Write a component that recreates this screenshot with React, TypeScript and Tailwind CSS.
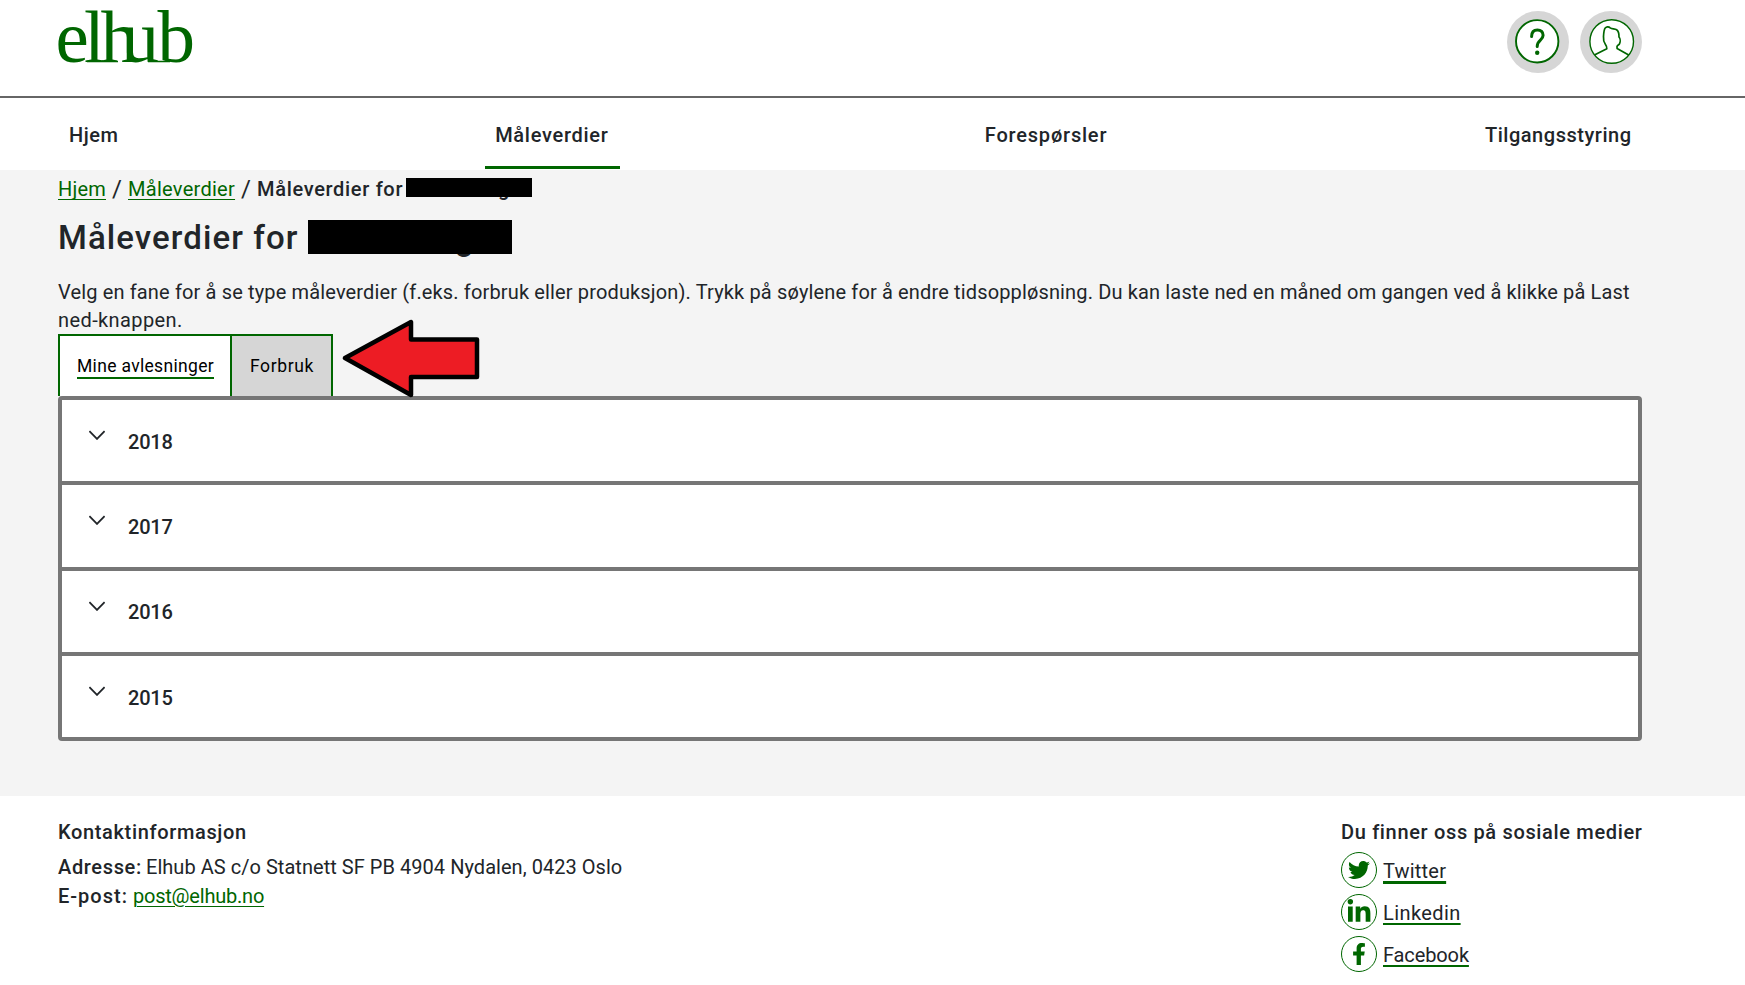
import type { ReactNode } from "react";
import { FaFacebookF, FaLinkedinIn, FaTwitter } from "react-icons/fa";

const navItems = [
  { label: "Hjem", box: "w-[72px] pl-[11px] tracking-[0.5px]", active: false },
  { label: "Måleverdier", box: "w-[135px] pl-[10.5px] tracking-[0.72px]", active: true },
  { label: "Forespørsler", box: "w-[145px] pl-[10.5px] tracking-[0.8px]", active: false },
  { label: "Tilgangsstyring", box: "w-[168px] pl-[11px] tracking-[0.53px]", active: false },
];

const years = [
  { year: 2018, box: "h-[85px] border-b-4", label: "pt-[28px]" },
  { year: 2017, box: "h-[86px] border-b-4", label: "pt-[28px]" },
  { year: 2016, box: "h-[85px] border-b-4", label: "pt-[27px]" },
  { year: 2015, box: "h-[81px]", label: "pt-[28px]" },
];

function Logo() {
  return (
    <svg viewBox="0 0 140 56" className="h-14 w-[140px] overflow-visible" role="img" aria-label="elhub">
      <text x="-2.5 26 42.5 63.5 99.5" y="51" fontSize="75" fill="#006600" fontFamily="Liberation Serif, serif">
        elhub
      </text>
      <path d="M29 50.4H60M90 50.4H112" stroke="#006600" strokeWidth="1.5" />
    </svg>
  );
}

function HelpIcon() {
  return (
    <svg viewBox="0 0 62 62" className="size-[62px]" fill="none">
      <circle cx="31" cy="31" r="31" fill="#d6d6d6" />
      <circle cx="30.2" cy="30.3" r="21.2" fill="#fff" stroke="#006600" strokeWidth="1.9" />
      <path
        d="M24.6 25.6C24.6 21 27 18.9 30.4 18.9C34 18.9 36.1 21.2 36.1 24.2C36.1 29.6 30.2 28.6 30.2 35.4"
        stroke="#006600"
        strokeWidth="3"
        strokeLinecap="round"
      />
      <circle cx="30.2" cy="41.7" r="2.2" fill="#006600" />
    </svg>
  );
}

function UserIcon() {
  return (
    <svg viewBox="0 0 62 62" className="size-[62px]" fill="none">
      <circle cx="31" cy="31" r="31" fill="#d6d6d6" />
      <circle cx="31.7" cy="30.5" r="21.8" fill="#fff" stroke="#006600" strokeWidth="1.4" />
      <path
        d="M14.9 43.8L26.8 37.8C26.8 35.6 26.4 34.6 25.2 33C23.5 30.8 23.3 28.5 23.5 25.5C23.7 21.5 23.9 18.6 25.2 17C26.4 15.7 28.6 15.2 30.2 16.9C32 18.2 34.6 17.6 36.6 18.8C38.6 20.2 39.1 23 39 26C40.2 27.4 40.6 30.6 39.6 32.6C39 34 37.4 34 37 35.4L37.1 37.5L48.7 44"
        stroke="#006600"
        strokeWidth="1.7"
        strokeLinejoin="round"
      />
    </svg>
  );
}

function SocialLink({ icon, children }: { icon: ReactNode; children: ReactNode }) {
  return (
    <li className="flex h-9 gap-[6px]">
      <span className="flex size-9 items-center justify-center rounded-full border border-[#006600] text-[#006600]">{icon}</span>
      <span className="pt-[5px]">{children}</span>
    </li>
  );
}

export default function App() {
  return (
    <div className="h-[985px] w-[1745px] overflow-hidden bg-white font-['Roboto',sans-serif] text-[20px] leading-[28px] whitespace-nowrap text-[#212529]">
      <header>
        <div className="h-[98px] border-b-2 border-[#666]">
          <div className="ml-[58px] flex w-[1584px] justify-between pt-[11px]">
            <Logo />
            <div className="flex gap-[11px]">
              <HelpIcon />
              <UserIcon />
            </div>
          </div>
        </div>
        <nav className="ml-[58px] flex h-[72px] w-[1584px] justify-between font-medium">
          {navItems.map((n) => (
            <a key={n.label} className={`${n.box} h-[71px] pt-[23px] ${n.active ? "border-b-[3px] border-[#006600]" : ""}`}>
              {n.label}
            </a>
          ))}
        </nav>
      </header>

      <main className="h-[626px] bg-[#f4f4f4] pt-[5px] pl-[58px]">
        <div className="flex h-[28px]">
          <a className="w-[48px] tracking-[0.2px] text-[#006600] underline decoration-1 underline-offset-[3px] [text-decoration-skip-ink:none]">Hjem</a>
          <span className="w-[22px] text-center text-[24px]">/</span>
          <a className="w-[107px] tracking-[0.28px] text-[#006600] underline decoration-1 underline-offset-[3px] [text-decoration-skip-ink:none]">Måleverdier</a>
          <span className="w-[22px] text-center text-[24px]">/</span>
          <span className="w-[149px] font-medium tracking-[0.68px]">Måleverdier for</span>
          <span className="relative w-[126px] pl-[92px] font-medium">
            g<span className="absolute top-[3px] left-0 h-[19px] w-[126px] bg-black" />
          </span>
        </div>
        <h1 className="mt-[15px] flex h-[40px] text-[33px] leading-[40px] font-medium">
          <span className="w-[250px] tracking-[1.08px]">Måleverdier for</span>
          <span className="relative w-[204px] pl-[147px]">
            <span className="relative top-px">g</span>
            <span className="absolute top-[2px] left-0 h-[34px] w-[204px] bg-black" />
          </span>
        </h1>
        <p className="mt-[20px]">
          <span className="tracking-[0.145px]">
            Velg en fane for å se type måleverdier (f.eks. forbruk eller produksjon). Trykk på søylene for å endre tidsoppløsning. Du kan laste ned en måned om gangen ved å klikke på Last
          </span>
          <br />
          <span className="tracking-[0.4px]">ned-knappen.</span>
        </p>
        <div className="relative flex h-[62px] text-[17.5px] text-black">
          <button className="flex w-[174px] items-start border-x-2 border-t-2 border-[#006600] bg-white pt-4 pl-[17px]">
            <span className="tracking-[0.32px] underline decoration-[#006600] decoration-2 underline-offset-[5px] [text-decoration-skip-ink:none]">Mine avlesninger</span>
          </button>
          <button className="flex w-[101px] items-start border-t-2 border-r-2 border-[#006600] bg-[#d6d6d6] pt-4 pl-[18px] tracking-[0.6px]">Forbruk</button>
          <svg viewBox="0 0 140 82" className="absolute top-[-16px] left-[284px] h-[82px] w-[140px]">
            <path d="M3 40L69 4V21.5H135V59H69V77Z" fill="#ed1c24" stroke="#000" strokeWidth="4.5" strokeLinejoin="round" />
          </svg>
        </div>
        <ul className="w-[1584px] rounded-[4px] border-4 border-[#767676] bg-white">
          {years.map((y) => (
            <li key={y.year} className={`flex border-[#767676] pl-[27px] ${y.box}`}>
              <svg viewBox="0 0 16 10" className="mt-[30px] h-[10px] w-4" fill="none" stroke="#212529" strokeWidth="1.8">
                <path d="M0.4 1.2L8 8.9L15.6 1.2" />
              </svg>
              <span className={`ml-[23px] font-medium tracking-[-0.2px] ${y.label}`}>{y.year}</span>
            </li>
          ))}
        </ul>
      </main>

      <footer className="ml-[58px] flex w-[1584px] justify-between pt-[22px]">
        <div>
          <h2 className="font-medium tracking-[0.65px]">Kontaktinformasjon</h2>
          <div className="mt-[7px] flex">
            <b className="w-[88px] font-medium tracking-[0.65px]">Adresse:</b>
            <span className="tracking-[0.04px]">Elhub AS c/o Statnett SF PB 4904 Nydalen, 0423 Oslo</span>
          </div>
          <div className="mt-px flex">
            <b className="w-[75px] font-medium tracking-[1px]">E-post:</b>
            <a className="tracking-[-0.22px] text-[#006600] underline decoration-1 underline-offset-[3px]">post@elhub.no</a>
          </div>
        </div>
        <div className="w-[301px]">
          <h2 className="font-medium tracking-[0.66px]">Du finner oss på sosiale medier</h2>
          <ul className="mt-[6px] flex flex-col gap-[6px]">
            <SocialLink icon={<FaTwitter size={22} />}>
              <a className="tracking-[0.2px] underline decoration-[#006600] decoration-[3px] underline-offset-[3px] [text-decoration-skip-ink:none]">Twitter</a>
            </SocialLink>
            <SocialLink icon={<FaLinkedinIn size={26} />}>
              <a className="tracking-[0.4px] underline decoration-[#006600] decoration-2 underline-offset-[3px] [text-decoration-skip-ink:none]">Linkedin</a>
            </SocialLink>
            <SocialLink icon={<FaFacebookF size={22} />}>
              <a className="tracking-[-0.12px] underline decoration-[#006600] decoration-2 underline-offset-[3px] [text-decoration-skip-ink:none]">Facebook</a>
            </SocialLink>
          </ul>
        </div>
      </footer>
    </div>
  );
}
